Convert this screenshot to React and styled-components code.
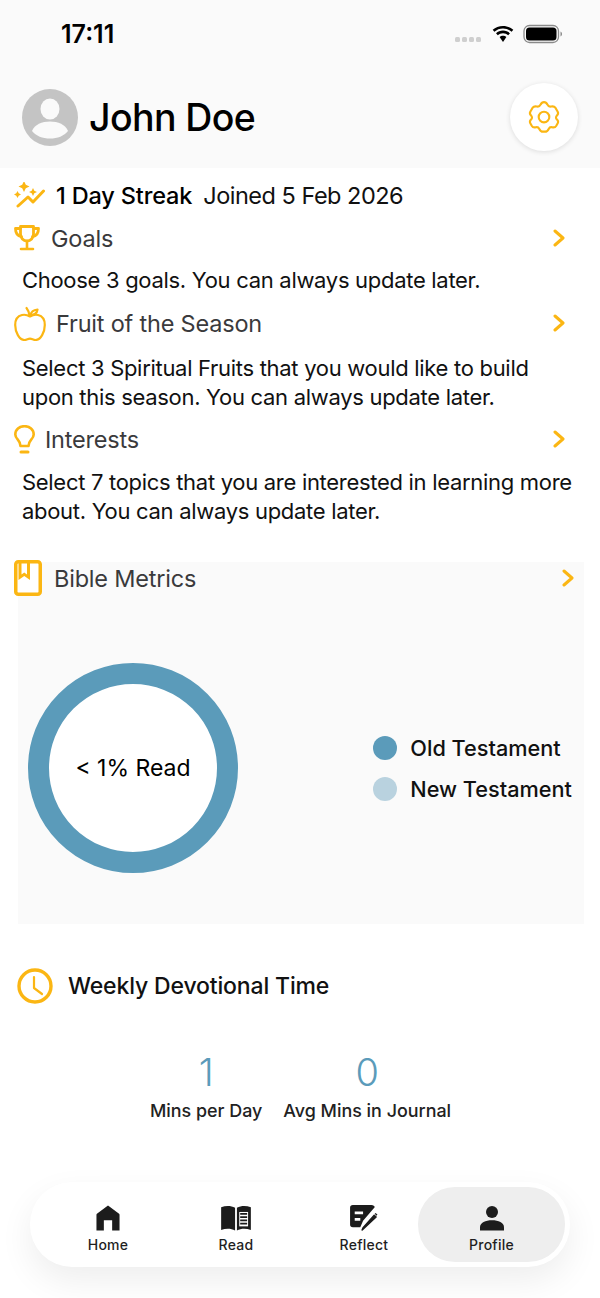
import React from "react";
import styled, { createGlobalStyle } from "styled-components";

const GOLD = "#fbb613";
const BLUE = "#5b9bba";

const Global = createGlobalStyle`
  html, body {
    margin: 0;
    padding: 0;
    background: #fff;
  }
  body {
    font-family: Inter, "Liberation Sans", sans-serif;
    color: #000;
  }
`;

const Page = styled.div`
  width: 600px;
  height: 1298px;
  overflow: hidden;
  background: #fff;
  display: flex;
  flex-direction: column;
`;

const Header = styled.header`
  height: 168px;
  background: #fafafa;
  display: flex;
  flex-direction: column;
`;

const StatusBar = styled.div`
  height: 68px;
  padding: 0 37px 0 61px;
  display: flex;
  align-items: center;
  justify-content: space-between;
`;

const Time = styled.span`
  font-size: 25px;
  font-weight: 600;
`;

const StatusIcons = styled.div`
  display: flex;
  align-items: center;
  gap: 8px;
`;

const Dots = styled.div`
  display: flex;
  gap: 2px;
  margin-top: 10px;
  margin-right: 2px;
`;

const Dot = styled.i`
  width: 5px;
  height: 5px;
  border-radius: 1.5px;
  background: #cfcfcf;
`;

const ProfileRow = styled.div`
  padding: 15px 22px 0;
  display: flex;
  align-items: center;
  justify-content: space-between;
`;

const Who = styled.div`
  display: flex;
  align-items: center;
  gap: 11px;
`;

const Name = styled.h1`
  margin: 0;
  font-size: 37.5px;
  font-weight: 500;
  letter-spacing: -0.6px;
`;

const SettingsButton = styled.div`
  width: 68px;
  height: 68px;
  border-radius: 50%;
  background: #fff;
  box-shadow: 0 1px 5px rgba(0, 0, 0, 0.12);
  display: flex;
  align-items: center;
  justify-content: center;
`;

const Content = styled.main`
  padding: 13px 0 0 14px;
  display: flex;
  flex-direction: column;
`;

const StreakRow = styled.div`
  height: 28px;
  display: flex;
  align-items: center;
  font-size: 23.5px;
  letter-spacing: -0.15px;
`;

const Streak = styled.strong`
  margin-left: 10px;
  margin-right: 11px;
  font-weight: 500;
`;

const Joined = styled.span`
  letter-spacing: -0.5px;
  color: #111;
`;

const SectionRow = styled.div`
  height: ${(p) => p.$h || 30}px;
  margin-top: ${(p) => p.$top || 0}px;
  padding-right: ${(p) => p.$right || 34}px;
  display: flex;
  align-items: center;
`;

const SectionTitle = styled.span`
  flex: 1;
  margin-left: ${(p) => p.$gap}px;
  font-size: 23.5px;
  letter-spacing: -0.2px;
  color: #3a3a3c;
`;

const Description = styled.p`
  margin: ${(p) => p.$top}px 0 0 8px;
  width: 556px;
  font-size: 22px;
  line-height: 29px;
  letter-spacing: -0.3px;
  color: #111;
`;

const Metrics = styled.section`
  margin-top: 34px;
  width: 570px;
`;

const MetricsTitle = styled(SectionRow)`
  position: relative;
  z-index: 1;
`;

const ChartPanel = styled.div`
  margin: -34px 0 0 4px;
  width: 566px;
  height: 362px;
  background: #fafafa;
  box-sizing: border-box;
  padding: 101px 12px 0 10px;
  display: flex;
  align-items: flex-start;
  justify-content: space-between;
`;

const Donut = styled.div`
  width: 210px;
  height: 210px;
  box-sizing: border-box;
  border: 21px solid ${BLUE};
  border-radius: 50%;
  background: #fff;
  display: flex;
  align-items: center;
  justify-content: center;
  font-size: 23px;
`;

const Legend = styled.ul`
  list-style: none;
  margin: 70px 0 0;
  padding: 0;
  display: flex;
  flex-direction: column;
  gap: 12px;
`;

const LegendItem = styled.li`
  height: 29px;
  display: flex;
  align-items: center;
  gap: 13px;
  font-size: 21.7px;
  font-weight: 450;
  color: #111;
`;

const LegendDot = styled.i`
  width: 24px;
  height: 24px;
  border-radius: 50%;
  background: ${(p) => p.$color};
`;

const WeeklyRow = styled.div`
  margin-top: 44px;
  padding-left: 3px;
  height: 36px;
  display: flex;
  align-items: center;
  gap: 15px;
  font-size: 23px;
  font-weight: 450;
  letter-spacing: -0.15px;
  color: #111;
`;

const Stats = styled.div`
  margin-top: 45px;
  margin-left: 136px;
  display: flex;
  gap: 21px;
`;

const Stat = styled.div`
  display: flex;
  flex-direction: column;
  align-items: center;
`;

const StatValue = styled.span`
  height: 46px;
  line-height: 46px;
  font-size: 38px;
  font-weight: 300;
  color: ${BLUE};
`;

const StatLabel = styled.span`
  margin-top: 4px;
  font-size: 17.9px;
  line-height: 24px;
  font-weight: 450;
  color: #222;
`;

const TabBar = styled.nav`
  margin: 59px 0 0 30px;
  width: 540px;
  height: 85px;
  box-sizing: border-box;
  padding: 5px;
  border-radius: 42px;
  background: #fff;
  box-shadow: 0 14px 34px rgba(0, 0, 0, 0.07);
  display: flex;
`;

const Tab = styled.div`
  width: ${(p) => p.$w}px;
  margin-left: ${(p) => p.$ml || 0}px;
  height: 75px;
  border-radius: 37px;
  background: ${(p) => (p.$active ? "#eeeeee" : "transparent")};
  display: flex;
  flex-direction: column;
  align-items: center;
  justify-content: flex-end;
  gap: 5px;
  padding-bottom: 9px;
  box-sizing: border-box;
  font-size: 14px;
  font-weight: 450;
  letter-spacing: 0.25px;
  color: #1f1f1f;
`;

const Chevron = () => (
  <svg width="14" height="18" viewBox="0 0 14 18" fill="none">
    <path d="M3 2l8 7-8 7" stroke={GOLD} strokeWidth="3" strokeLinecap="round" strokeLinejoin="round" />
  </svg>
);

const Wifi = () => (
  <svg width="24" height="18" viewBox="0 0 24 18">
    <path d="M12 3.4c3.3 0 6.3 1.2 8.6 3.3l1.7-1.9C19.600 2.300 16 .9 12 .9S4.400 2.300 1.700 4.800l1.700 1.900C5.700 4.600 8.700 3.400 12 3.400z" />
    <path d="M12 8.200c2 0 3.800.7 5.200 2l1.800-1.900C17.100 6.600 14.700 5.600 12 5.600s-5.100 1-7 2.700l1.800 1.900c1.400-1.300 3.200-2 5.200-2z" />
    <path d="M12 10.800c-1.300 0-2.500.5-3.400 1.300L12 17l3.400-4.900c-.9-.8-2.100-1.300-3.400-1.300z" />
  </svg>
);

const Battery = () => (
  <svg width="40" height="20" viewBox="0 0 40 20">
    <rect x="1" y="1.500" width="34.500" height="17" rx="5.500" fill="none" stroke="#8a8a8a" strokeWidth="1.300" />
    <rect x="3" y="3.500" width="30.500" height="13" rx="3.500" fill="#000" />
    <path d="M37.500 7.500c1 .4 1.500 1.300 1.500 2.500s-.5 2.100-1.500 2.500z" fill="#8a8a8a" />
  </svg>
);

const Avatar = () => (
  <svg width="56" height="57" viewBox="0 0 56 57">
    <ellipse cx="28" cy="28.500" rx="28" ry="28.500" fill="#c4c4c4" />
    <ellipse cx="28" cy="20" rx="9.500" ry="10.500" fill="#fafafa" />
    <path d="M10 42c2.500-6.500 10-9.500 18-9.500S43.500 35.500 46 42c-4 5-10.500 7.500-18 7.500S14 47 10 42z" fill="#fafafa" />
  </svg>
);

const Gear = () => (
  <svg width="34" height="34" viewBox="0 0 32 32" fill="none" stroke={GOLD} strokeWidth="2" strokeLinejoin="round">
    <path d="M16 2.500c1.500 0 2.600 1 3.300 2.400.6 1.300 2 2 3.400 1.700 1.500-.3 3-.3 3.900 1l2.300 4c.7 1.300.2 2.700-.9 3.700-.9.900-.9 2.500 0 3.400 1.100 1 1.600 2.400.9 3.700l-1.500 2.600c-.8 1.300-2.300 1.500-3.800 1.100-1.300-.3-2.600.4-3.200 1.600-.7 1.400-1.800 2.600-3.400 2.600h-2c-1.600 0-2.700-1.200-3.400-2.600-.6-1.200-1.900-1.900-3.200-1.600-1.500.4-3 .2-3.800-1.100l-1.500-2.600c-.7-1.300-.2-2.700.9-3.700.9-.9.900-2.500 0-3.400-1.100-1-1.600-2.400-.9-3.700l2.300-4c.9-1.300 2.400-1.300 3.900-1 1.400.3 2.800-.4 3.400-1.700.7-1.400 1.800-2.400 3.300-2.400z" transform="translate(0 -.5)" />
    <circle cx="16" cy="16" r="5" />
  </svg>
);

const StreakIcon = () => (
  <svg width="32" height="26" viewBox="0 0 32 26" fill={GOLD}>
    <path d="M10 -1l1.800 3.700L15.500 4.500l-3.700 1.800L10 10 8.200 6.300 4.500 4.500l3.700-1.800z" />
    <path d="M3.500 9l1.200 2.300L7 12.500l-2.300 1.200L3.500 16l-1.200-2.300L0 12.500l2.300-1.200z" />
    <path d="M19 6l1.300 2.700L23 10l-2.700 1.300L19 14l-1.300-2.700L15 10l2.700-1.300z" />
    <path d="M4 24l10-9 5 5L29.500 9" fill="none" stroke={GOLD} strokeWidth="3" strokeLinecap="round" strokeLinejoin="round" />
  </svg>
);

const TrophyIcon = () => (
  <svg width="26" height="26" viewBox="0 0 26 26" fill="none" stroke={GOLD} strokeWidth="2.800" strokeLinecap="round" strokeLinejoin="round">
    <path d="M6.500 1.500h13v7.500c0 4-2.800 7-6.500 7s-6.500-3-6.500-7z" />
    <path d="M6.500 3.500H1.500c0 4.500 1.800 7.500 6 8.200M19.500 3.500h5c0 4.500-1.800 7.500-6 8.200" />
    <path d="M13 16v7M7 24h12" strokeWidth="2.600" />
  </svg>
);

const AppleIcon = () => (
  <svg width="32" height="35" viewBox="0 0 32 35" fill="none" stroke={GOLD} strokeWidth="2.200" strokeLinecap="round" strokeLinejoin="round">
    <path d="M16 10.500c-2.500-1.500-5-2.200-8-1.500C3.500 10 1.200 14 1.200 19c0 7 4 15 9.300 15 2.300 0 3.500-1.300 5.500-1.300s3.200 1.300 5.500 1.300c5.300 0 9.300-8 9.300-15 0-5-2.300-9-6.800-10-3-.7-5.500 0-8 1.500z" />
    <path d="M15.500 10c0-3-1-5.500-3-8M16.500 9c.5-3 3-5 7-5.500-.5 3.500-3 5.500-7 5.500z" />
  </svg>
);

const BulbIcon = () => (
  <svg width="21" height="29" viewBox="0 0 21 29" fill="none" stroke={GOLD} strokeWidth="2.600" strokeLinecap="round" strokeLinejoin="round">
    <path d="M6.500 21c0-3-1-4.300-2.700-6.300C2.300 13 1.300 11.200 1.300 9.500c0-4.800 4-8.300 9.200-8.300s9.200 3.500 9.200 8.300c0 1.700-1 3.500-2.500 5.200-1.700 2-2.700 3.300-2.700 6.300z" />
    <path d="M7 27h7" strokeWidth="3" />
  </svg>
);

const BookIcon = () => (
  <svg width="28" height="36" viewBox="0 0 28 36" fill="none">
    <rect x="1.750" y="1.750" width="24.500" height="32.500" rx="2.500" fill="#fff" stroke={GOLD} strokeWidth="3.500" />
    <path d="M4.500 2h11.500v18l-5.750-4L4.500 20z" fill={GOLD} />
    <path d="M7.500 3.500h5.500v11l-2.750-2-2.750 2z" fill="#fff" />
  </svg>
);

const ClockIcon = () => (
  <svg width="36" height="36" viewBox="0 0 36 36" fill="none" stroke={GOLD} strokeLinecap="round" strokeLinejoin="round">
    <circle cx="18" cy="18" r="16" strokeWidth="3.400" />
    <path d="M17 9v11l8 6" strokeWidth="2.200" />
  </svg>
);

const HomeIcon = () => (
  <svg width="24" height="26" viewBox="0 0 26 28" fill="#1c1c1c">
    <path d="M13 .5L25 9.500a1.500 1.500 0 0 1 .5 1.200V27.500h-8V16.500h-9v11H.5V10.700A1.500 1.500 0 0 1 1 9.500z" />
  </svg>
);

const ReadIcon = () => (
  <svg width="32" height="26" viewBox="0 0 32 28">
    <path d="M0 2.500C5 .5 10.500.5 15 3v24.500C10.500 25 5 25 0 27z" fill="#1c1c1c" />
    <path d="M17 3c4.500-2.500 10-2.500 15-.5V27c-5-2-10.500-2-15 .5z" fill="#1c1c1c" />
    <path d="M19.500 7.500h9.500v15.500h-9.500z" fill="#fff" />
    <path d="M20.500 9.500h7.500M20.500 13h7.500M20.500 16.500h7.500M20.500 20h7.500" stroke="#1c1c1c" strokeWidth="1.800" />
  </svg>
);

const ReflectIcon = () => (
  <svg width="30" height="26" viewBox="0 0 30 28">
    <path d="M3 0h20c2 0 3.500 1 3.500 2.500L14 17l-3 7H3c-2 0-3-1-3-3V3c0-2 1-3 3-3z" fill="#1c1c1c" />
    <path d="M5 7h9v3H5zM5 14h6v3H5z" fill="#fff" />
    <path d="M14.500 25.500l-1.500 1.500 1-2.500L26 11l2 2z" fill="#1c1c1c" stroke="#1c1c1c" strokeWidth="1.600" strokeLinejoin="round" />
    <path d="M26.500 9.500l1-1 2 1.800-1 1.200z" fill="#1c1c1c" />
  </svg>
);

const PersonIcon = () => (
  <svg width="24" height="26" viewBox="0 0 26 27" fill="#1c1c1c">
    <circle cx="13" cy="7" r="6.500" />
    <path d="M0 27v-3.500C0 18.500 6 16 13 16s13 2.500 13 7.500V27z" />
  </svg>
);

const tabs = [
  { label: "Home", icon: <HomeIcon />, w: 146 },
  { label: "Read", icon: <ReadIcon />, w: 110 },
  { label: "Reflect", icon: <ReflectIcon />, w: 108, ml: 19 },
];

export default function App() {
  return (
    <>
      <Global />
      <Page>
        <Header>
          <StatusBar>
            <Time>17:11</Time>
            <StatusIcons>
              <Dots>
                <Dot />
                <Dot />
                <Dot />
                <Dot />
              </Dots>
              <Wifi />
              <Battery />
            </StatusIcons>
          </StatusBar>
          <ProfileRow>
            <Who>
              <Avatar />
              <Name>John Doe</Name>
            </Who>
            <SettingsButton>
              <Gear />
            </SettingsButton>
          </ProfileRow>
        </Header>
        <Content>
          <StreakRow>
            <StreakIcon />
            <Streak>1 Day Streak</Streak>
            <Joined>Joined 5 Feb 2026</Joined>
          </StreakRow>
          <SectionRow $top={14}>
            <TrophyIcon />
            <SectionTitle $gap={11}>Goals</SectionTitle>
            <Chevron />
          </SectionRow>
          <Description $top={13}>Choose 3 goals. You can always update later.</Description>
          <SectionRow $top={13}>
            <AppleIcon />
            <SectionTitle $gap={10}>Fruit of the Season</SectionTitle>
            <Chevron />
          </SectionRow>
          <Description $top={16}>
            Select 3 Spiritual Fruits that you would like to build upon this season. You can always update later.
          </Description>
          <SectionRow $top={12}>
            <BulbIcon />
            <SectionTitle $gap={10}>Interests</SectionTitle>
            <Chevron />
          </SectionRow>
          <Description $top={14}>
            Select 7 topics that you are interested in learning more about. You can always update later.
          </Description>
          <Metrics>
            <MetricsTitle $h={36} $right={9}>
              <BookIcon />
              <SectionTitle $gap={12}>Bible Metrics</SectionTitle>
              <Chevron />
            </MetricsTitle>
            <ChartPanel>
              <Donut>&lt; 1% Read</Donut>
              <Legend>
                <LegendItem>
                  <LegendDot $color={BLUE} />
                  Old Testament
                </LegendItem>
                <LegendItem>
                  <LegendDot $color="#b9d2df" />
                  New Testament
                </LegendItem>
              </Legend>
            </ChartPanel>
          </Metrics>
          <WeeklyRow>
            <ClockIcon />
            Weekly Devotional Time
          </WeeklyRow>
          <Stats>
            <Stat>
              <StatValue>1</StatValue>
              <StatLabel>Mins per Day</StatLabel>
            </Stat>
            <Stat>
              <StatValue>0</StatValue>
              <StatLabel>Avg Mins in Journal</StatLabel>
            </Stat>
          </Stats>
        </Content>
        <TabBar>
          {tabs.map((t) => (
            <Tab key={t.label} $w={t.w} $ml={t.ml}>
              {t.icon}
              {t.label}
            </Tab>
          ))}
          <Tab $w={147} $active>
            <PersonIcon />
            Profile
          </Tab>
        </TabBar>
      </Page>
    </>
  );
}
